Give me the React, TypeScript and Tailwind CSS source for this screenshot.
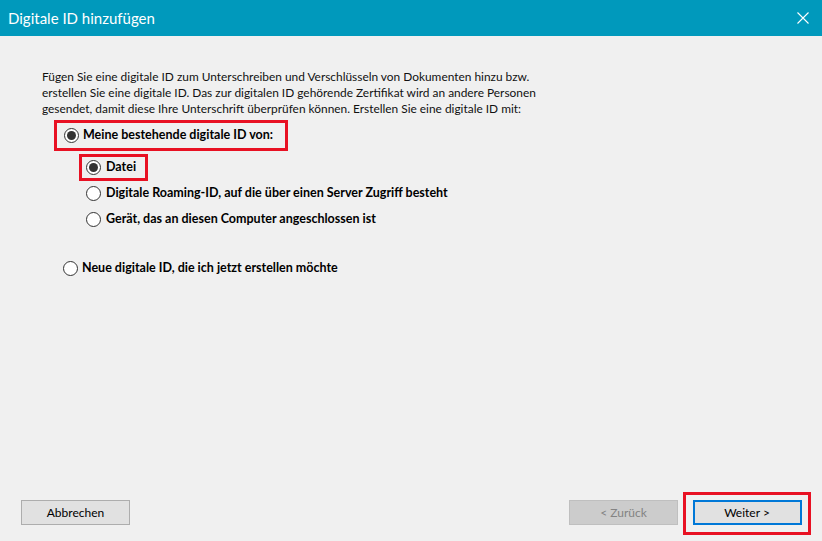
import { useState } from "react";

type RadioProps = {
  checked: boolean;
  onSelect: () => void;
};

function Radio({ checked, onSelect }: RadioProps) {
  return (
    <button
      type="button"
      onClick={onSelect}
      className="flex h-[15px] w-[15px] shrink-0 items-center justify-center rounded-full border border-[#333333] bg-white"
    >
      {checked && <span className="h-[9px] w-[9px] rounded-full bg-[#333333]" />}
    </button>
  );
}

const font = "font-['Lato','Liberation_Sans',sans-serif]";

export default function App() {
  const [source, setSource] = useState<"existing" | "new">("existing");
  const [target, setTarget] = useState<"file" | "roaming" | "device">("file");

  return (
    <div className={`flex h-[541px] w-[822px] flex-col bg-[#f0f0f0] text-black ${font}`}>
      {/* title bar */}
      <div className="flex h-[36px] shrink-0 items-center justify-between bg-[#0099bc] pl-[8px] pr-[13px]">
        <span className="text-[15px] text-white">Digitale ID hinzufügen</span>
        <svg width="12" height="12" viewBox="0 0 12 12" className="text-white">
          <path d="M0.5 0.5 L11.5 11.5 M11.5 0.5 L0.5 11.5" stroke="currentColor" strokeWidth="1.1" />
        </svg>
      </div>

      <div className="flex-1 pl-[42px] pt-[33px]">
        <p className="whitespace-nowrap text-[11.9px] leading-[16px] text-[#111]">
          Fügen Sie eine digitale ID zum Unterschreiben und Verschlüsseln von Dokumenten hinzu bzw.
          <br />
          erstellen Sie eine digitale ID. Das zur digitalen ID gehörende Zertifikat wird an andere Personen
          <br />
          gesendet, damit diese Ihre Unterschrift überprüfen können. Erstellen Sie eine digitale ID mit:
        </p>

        <div className="ml-[12px] mt-[3px] flex h-[31px] w-[234px] items-center gap-[4px] border-[3px] border-[#e81123] pl-[7px]">
          <Radio checked={source === "existing"} onSelect={() => setSource("existing")} />
          <span className="whitespace-nowrap text-[12.5px] font-bold">Meine bestehende digitale ID von:</span>
        </div>

        <div className="ml-[37px] mt-[3px] flex h-[27px] w-[69px] items-center gap-[5px] border-[3px] border-[#e81123] pl-[4px]">
          <Radio checked={target === "file"} onSelect={() => setTarget("file")} />
          <span className="text-[12.5px] font-bold">Datei</span>
        </div>

        <div className="ml-[44px] mt-[2px] flex h-[20px] items-center gap-[5px]">
          <Radio checked={target === "roaming"} onSelect={() => setTarget("roaming")} />
          <span className="whitespace-nowrap text-[12.5px] font-bold">
            Digitale Roaming-ID, auf die über einen Server Zugriff besteht
          </span>
        </div>

        <div className="ml-[44px] mt-[6px] flex h-[20px] items-center gap-[5px]">
          <Radio checked={target === "device"} onSelect={() => setTarget("device")} />
          <span className="whitespace-nowrap text-[12.5px] font-bold">
            Gerät, das an diesen Computer angeschlossen ist
          </span>
        </div>

        <div className="ml-[21px] mt-[29px] flex h-[20px] items-center gap-[4px]">
          <Radio checked={source === "new"} onSelect={() => setSource("new")} />
          <span className="whitespace-nowrap text-[12.5px] font-bold">
            Neue digitale ID, die ich jetzt erstellen möchte
          </span>
        </div>
      </div>

      {/* footer buttons */}
      <div className="mb-[6px] flex h-[43px] shrink-0 items-start">
        <button className="ml-[21px] mt-[8px] h-[25px] w-[109px] border border-[#adadad] bg-[#e1e1e1] text-[12px]">
          Abbrechen
        </button>
        <div className="flex-1" />
        <button
          disabled
          className="mt-[8px] h-[25px] w-[109px] border border-[#bfbfbf] bg-[#cccccc] text-[12px] text-[#838383]"
        >
          &lt; Zurück
        </button>
        <div className="ml-[5px] mr-[11px] flex h-[43px] w-[128px] items-start justify-center border-[3px] border-[#e81123] pt-[5px]">
          <button className="h-[25px] w-[109px] border-2 border-[#0078d7] bg-[#e1e1e1] text-[12px]">
            Weiter &gt;
          </button>
        </div>
      </div>
    </div>
  );
}
